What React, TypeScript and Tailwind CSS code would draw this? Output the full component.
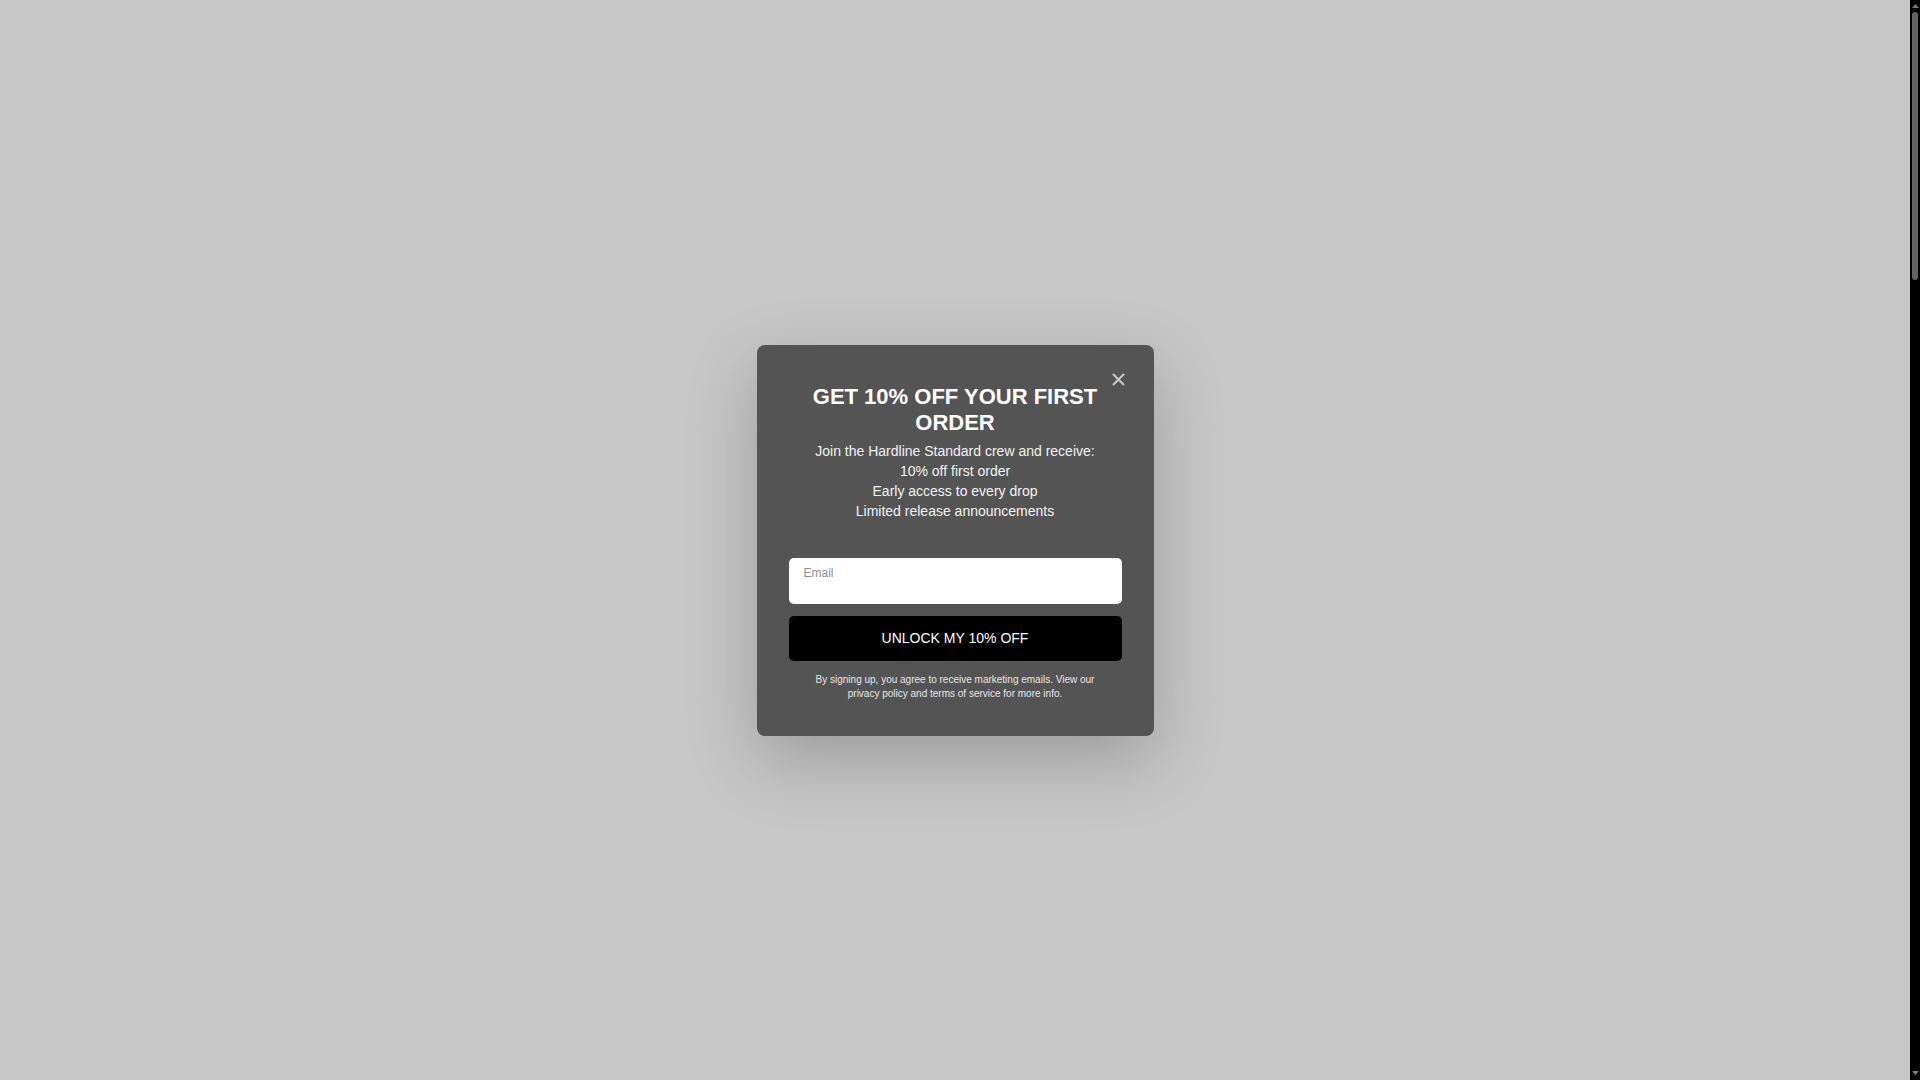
import React from "react";

function ScrollBar() {
  return (
    <div className="flex h-screen w-[10px] shrink-0 flex-col items-center bg-black">
      <svg width="7" height="4" viewBox="0 0 7 4" className="mt-[4px]">
        <path d="M3.5 0L7 4H0Z" fill="#7a7a7a" />
      </svg>
      <div className="mt-[4px] h-[268px] w-[6px] rounded-full bg-[#636363]" />
      <div className="flex-1" />
      <svg width="7" height="4" viewBox="0 0 7 4" className="mb-[5px]">
        <path d="M0 0H7L3.5 4Z" fill="#7a7a7a" />
      </svg>
    </div>
  );
}

export default function App() {
  return (
    <div
      className="flex h-screen w-full overflow-hidden bg-[#c7c7c7]"
      style={{ fontFamily: '"Liberation Sans", Arial, sans-serif' }}
    >
      <div className="flex flex-1 items-center justify-center">
        <div className="relative w-[397px] rounded-[8px] bg-[#555455] px-[32px] pt-[39px] pb-[35px] shadow-[0_24px_70px_rgba(0,0,0,0.22)]">
          <button
            type="button"
            aria-label="Close"
            className="absolute right-[28px] top-[28px] flex h-[14px] w-[14px] items-center justify-center text-[#c8c8c8]"
          >
            <svg width="13" height="13" viewBox="0 0 13 13" fill="none">
              <path d="M1.5 1.5L11.5 11.5M11.5 1.5L1.5 11.5" stroke="currentColor" strokeWidth="2" strokeLinecap="round" />
            </svg>
          </button>
          <h2 className="text-center text-[22px] font-bold leading-[26px] text-white">
            GET 10% OFF YOUR FIRST
            <br />
            ORDER
          </h2>
          <div className="mt-[5px] text-center text-[14px] leading-[20px] text-[#f2f2f2]">
            <p>Join the Hardline Standard crew and receive:</p>
            <p>10% off first order</p>
            <p>Early access to every drop</p>
            <p>Limited release announcements</p>
          </div>
          <div className="mt-[37px] h-[46px] w-full rounded-[5px] bg-white px-[15px] pt-[8px]">
            <div className="text-[12px] leading-[14px] text-[#8c8c8c]">Email</div>
          </div>
          <button
            type="button"
            className="mt-[12px] flex h-[45px] w-full items-center justify-center rounded-[5px] bg-black text-[14px] text-white"
          >
            UNLOCK MY 10% OFF
          </button>
          <p className="mt-[12px] px-[12px] text-center text-[10px] leading-[14px] text-[#e6e6e6]">
            By signing up, you agree to receive marketing emails. View our privacy policy and terms of
            service for more info.
          </p>
        </div>
      </div>
      <ScrollBar />
    </div>
  );
}
